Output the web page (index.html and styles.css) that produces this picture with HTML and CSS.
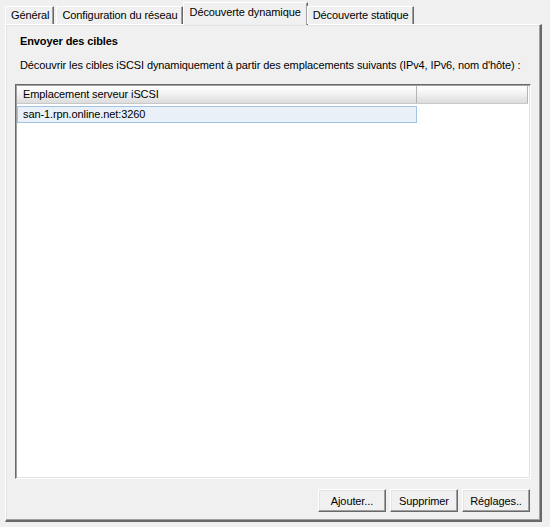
FILE: index.html
```html
<!DOCTYPE html>
<html lang="fr">
<head>
    <meta charset="UTF-8">
    <title>Propriétés de l'initiateur iSCSI</title>
    <link rel="stylesheet" href="styles.css">
</head>
<body>
    <div class="window">
        <div class="tabs">
            <div class="tab">Général</div>
            <div class="tab">Configuration du réseau</div>
            <div class="tab active">Découverte dynamique</div>
            <div class="tab">Découverte statique</div>
        </div>

        <div class="panel">
            <div class="group-title">Envoyer des cibles</div>
            <p class="hint">Découvrir les cibles iSCSI dynamiquement à partir des emplacements suivants (IPv4, IPv6, nom d'hôte) :</p>

            <div class="list">
                <div class="list-head">
                    <div class="col col-main">Emplacement serveur iSCSI</div>
                    <div class="col col-rest"></div>
                </div>
                <div class="list-row selected">san-1.rpn.online.net:3260</div>
            </div>

            <div class="actions">
                <button class="btn">Ajouter...</button>
                <button class="btn">Supprimer</button>
                <button class="btn">Réglages..</button>
            </div>
        </div>
    </div>
</body>
</html>
```

FILE: styles.css
```css
* {
    margin: 0;
    padding: 0;
    box-sizing: border-box;
}

body {
    font-family: Tahoma, "Liberation Sans", Arial, sans-serif;
    font-size: 11px;
    letter-spacing: -0.1px;
    color: #000000;
    background: #f0f0f0;
}

.window {
    padding: 2px 8px 6px 5px;
}

/* tab strip */
.tabs {
    display: flex;
    align-items: flex-end;
    height: 22px;
    position: relative;
    z-index: 1;
}

.tab {
    height: 18px;
    line-height: 16px;
    padding: 0 4px 0 5px;
    margin-right: 2px;
    background: #f0f0f0;
    border: 1px solid #ffffff;
    border-right-color: #696969;
    border-bottom: none;
    box-shadow: inset -1px 0 0 #a0a0a0;
    white-space: nowrap;
}

.tab.active {
    height: 23px;
    line-height: 19px;
    margin: 0 0 -1px -2px;
    padding: 0 6px;
}

.tabs .tab.active + .tab {
    margin-left: -1px;
}

/* page body under the tabs */
.panel {
    height: 498px;
    display: flex;
    flex-direction: column;
    padding: 10px 9px 8px 9px;
    border: 1px solid #ffffff;
    border-right: 2px solid #696969;
    border-bottom: 2px solid #696969;
    box-shadow: inset -1px -1px 0 #a0a0a0, inset 1px 1px 0 #e3e3e3;
}

.group-title {
    font-weight: bold;
    padding-left: 5px;
    height: 14px;
}

.hint {
    padding-left: 5px;
    margin-top: 10px;
    height: 14px;
    white-space: nowrap;
}

/* server list */
.list {
    flex: 1;
    margin-top: 11px;
    background: #ffffff;
    border: 1px solid;
    border-color: #696969 #ffffff #ffffff #696969;
    box-shadow: inset 1px 1px 0 #a0a0a0, inset -1px -1px 0 #e3e3e3;
    padding: 1px;
}

.list-head {
    display: flex;
    height: 18px;
    background: linear-gradient(#ffffff 0%, #f4f4f4 40%, #dcdcdc 100%);
    border-bottom: 1px solid #c8c8c8;
    margin-right: 1px;
}

.col {
    padding: 0 6px;
    line-height: 16px;
    border-right: 1px solid #b4b4b4;
}

.col-main {
    width: 400px;
}

.col-rest {
    flex: 1;
}

.list-row {
    width: 400px;
    height: 17px;
    margin-top: 2px;
    line-height: 15px;
    padding: 0 5px;
    white-space: nowrap;
}

.list-row.selected {
    background: #e9f0f8;
    border: 1px solid #a2c3e4;
}

/* buttons */
.actions {
    display: flex;
    justify-content: flex-end;
    gap: 4px;
    margin-top: 10px;
    padding-right: 1px;
}

.btn {
    width: 68px;
    height: 23px;
    font-family: inherit;
    font-size: 11px;
    letter-spacing: inherit;
    color: #000000;
    background: #f0f0f0;
    border: 1px solid;
    border-color: #ffffff #696969 #696969 #ffffff;
    box-shadow: inset -1px -1px 0 #a0a0a0, inset 1px 1px 0 #e3e3e3;
}
```
